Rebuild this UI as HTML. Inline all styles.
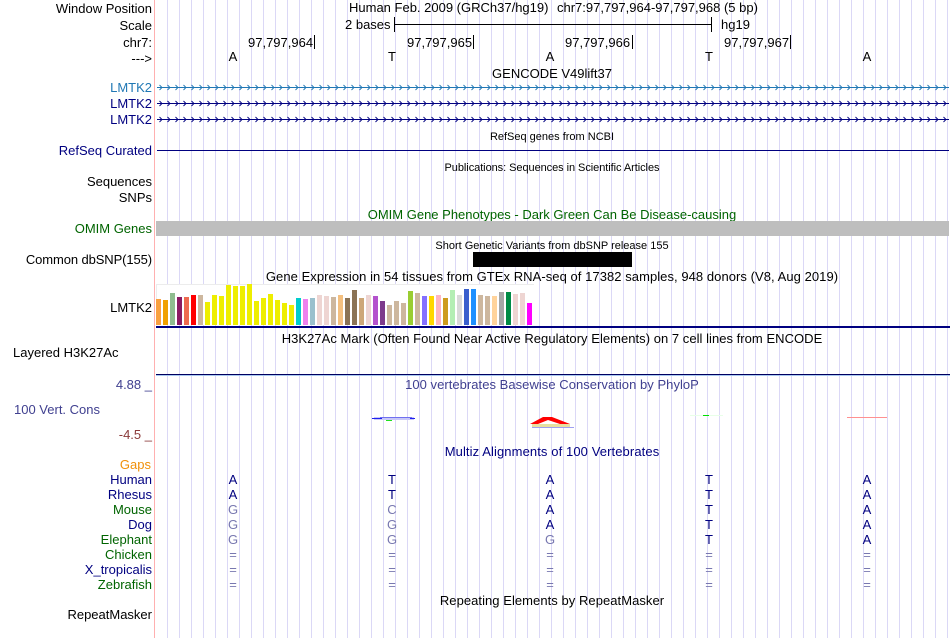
<!DOCTYPE html>
<html>
<head>
<meta charset="utf-8">
<style>
html,body{margin:0;padding:0;background:#fff;}
body{width:950px;height:638px;position:relative;overflow:hidden;font-family:"Liberation Sans",sans-serif;font-size:13px;color:#000;}
#grid{position:absolute;left:167px;top:0;width:783px;height:638px;background:linear-gradient(to right,#dbd8f6 1px,transparent 1px) 0 0/12px 100% repeat-x;}
#pink{position:absolute;left:154px;top:0;width:1px;height:638px;background:#ffb0b0;}
.l{position:absolute;right:798px;white-space:nowrap;line-height:16px;height:16px;text-align:right;}
.a{position:absolute;white-space:nowrap;line-height:16px;height:16px;}
.c{position:absolute;left:152px;width:800px;text-align:center;white-space:nowrap;line-height:16px;height:16px;}
.s{font-size:11px;}
.b{position:absolute;}
.n{color:#000080;}
.g{color:#006400;}
.f{color:#7878b0;}
.m{position:absolute;width:20px;text-align:center;line-height:16px;height:16px;}
</style>
</head>
<body>
<div id="grid"></div>
<div id="pink"></div>

<div class="l" style="top:1px">Window Position</div>
<div class="l" style="top:18px">Scale</div>
<div class="l" style="top:35px">chr7:</div>
<div class="l" style="top:51px">---&gt;</div>
<div class="l" style="top:80px;color:#1f77b4">LMTK2</div>
<div class="l n" style="top:96px">LMTK2</div>
<div class="l n" style="top:112px">LMTK2</div>
<div class="l n" style="top:143px">RefSeq Curated</div>
<div class="l" style="top:174px">Sequences</div>
<div class="l" style="top:190px">SNPs</div>
<div class="l g" style="top:221px">OMIM Genes</div>
<div class="l" style="top:252px;letter-spacing:-.1px">Common dbSNP(155)</div>
<div class="l" style="top:300px">LMTK2</div>
<div class="a" style="left:13px;top:345px">Layered H3K27Ac</div>
<div class="l" style="top:377px;color:#404090">4.88 _</div>
<div class="a" style="left:14px;top:402px;color:#404090">100 Vert. Cons</div>
<div class="l" style="top:427px;color:#8b3a3a">-4.5 _</div>
<div class="l" style="top:457px;right:799px;color:#f0900a">Gaps</div>
<div class="l n" style="top:472px">Human</div>
<div class="l n" style="top:487px">Rhesus</div>
<div class="l g" style="top:502px">Mouse</div>
<div class="l n" style="top:517px">Dog</div>
<div class="l g" style="top:532px">Elephant</div>
<div class="l g" style="top:547px">Chicken</div>
<div class="l n" style="top:562px">X_tropicalis</div>
<div class="l g" style="top:577px">Zebrafish</div>
<div class="l" style="top:607px">RepeatMasker</div>

<div class="a" style="left:349px;top:0">Human Feb. 2009 (GRCh37/hg19)</div>
<div class="a" style="left:557px;top:0">chr7:97,797,964-97,797,968 (5 bp)</div>
<div class="a" style="left:345px;top:17px">2 bases</div>
<div class="a" style="left:721px;top:17px">hg19</div>
<div class="b" style="left:394px;top:24px;width:318px;height:1px;background:#000"></div>
<div class="b" style="left:394px;top:17px;width:1px;height:15px;background:#000"></div>
<div class="b" style="left:711px;top:17px;width:1px;height:15px;background:#000"></div>

<div class="a" style="left:248px;top:35px">97,797,964</div>
<div class="b" style="left:314px;top:35px;width:1px;height:14px;background:#000"></div>
<div class="a" style="left:407px;top:35px">97,797,965</div>
<div class="b" style="left:473px;top:35px;width:1px;height:14px;background:#000"></div>
<div class="a" style="left:565px;top:35px">97,797,966</div>
<div class="b" style="left:632px;top:35px;width:1px;height:14px;background:#000"></div>
<div class="a" style="left:724px;top:35px">97,797,967</div>
<div class="b" style="left:790px;top:35px;width:1px;height:14px;background:#000"></div>

<div class="m" style="left:223px;top:49px">A</div>
<div class="m" style="left:382px;top:49px">T</div>
<div class="m" style="left:540px;top:49px">A</div>
<div class="m" style="left:699px;top:49px">T</div>
<div class="m" style="left:857px;top:49px">A</div>

<div class="c" style="top:66px">GENCODE V49lift37</div>

<svg class="b" style="left:157px;top:80px" width="792" height="47" viewBox="0 0 792 47">
<defs>
<pattern id="p1" x="0" y="0" width="8" height="47" patternUnits="userSpaceOnUse">
<path d="M2.5 5L5 7.5L2.5 10" fill="none" stroke="#1f77b4" stroke-width=".9"/>
<path d="M2.5 21L5 23.5L2.5 26" fill="none" stroke="#000080" stroke-width=".9"/>
<path d="M2.5 37L5 39.5L2.5 42" fill="none" stroke="#000080" stroke-width=".9"/>
</pattern>
</defs>
<rect x="0" y="7" width="792" height="1" fill="#1f77b4"/>
<rect x="0" y="23" width="792" height="1" fill="#000080"/>
<rect x="0" y="39" width="792" height="1" fill="#000080"/>
<rect x="0" y="0" width="792" height="47" fill="url(#p1)"/>
</svg>

<div class="c s" style="top:129px">RefSeq genes from NCBI</div>
<div class="b" style="left:157px;top:150px;width:792px;height:1px;background:#000080"></div>
<div class="c s" style="top:160px;letter-spacing:-.06px">Publications: Sequences in Scientific Articles</div>
<div class="c g" style="top:207px">OMIM Gene Phenotypes - Dark Green Can Be Disease-causing</div>
<div class="b" style="left:156px;top:221px;width:793px;height:15px;background:#bebebe"></div>
<div class="c s" style="top:238px">Short Genetic Variants from dbSNP release 155</div>
<div class="b" style="left:473px;top:252px;width:159px;height:15px;background:#000"></div>
<div class="c" style="top:269px;letter-spacing:.055px">Gene Expression in 54 tissues from GTEx RNA-seq of 17382 samples, 948 donors (V8, Aug 2019)</div>

<svg class="b" style="left:156px;top:284px" width="794" height="44" viewBox="0 0 794 44">
<rect x="0" y="0" width="378" height="41" fill="#fff"/>
<path d="M0.5 41V0.5H378" fill="none" stroke="#ececec"/>
<rect x="0" y="15" width="5" height="26" fill="#f9a040"/>
<rect x="7" y="16" width="5" height="25" fill="#f0a000"/>
<rect x="14" y="9" width="5" height="32" fill="#8fbc8f"/>
<rect x="21" y="13" width="5" height="28" fill="#8b1a62"/>
<rect x="28" y="13" width="5" height="28" fill="#ee6a50"/>
<rect x="35" y="11" width="5" height="30" fill="#ff0000"/>
<rect x="42" y="11" width="5" height="30" fill="#cdb79e"/>
<rect x="49" y="18" width="5" height="23" fill="#eeee00"/>
<rect x="56" y="11" width="5" height="30" fill="#eeee00"/>
<rect x="63" y="12" width="5" height="29" fill="#eeee00"/>
<rect x="70" y="1" width="5" height="40" fill="#eeee00"/>
<rect x="77" y="2" width="5" height="39" fill="#eeee00"/>
<rect x="84" y="2" width="5" height="39" fill="#eeee00"/>
<rect x="91" y="0" width="5" height="41" fill="#eeee00"/>
<rect x="98" y="17" width="5" height="24" fill="#eeee00"/>
<rect x="105" y="14" width="5" height="27" fill="#eeee00"/>
<rect x="112" y="10" width="5" height="31" fill="#eeee00"/>
<rect x="119" y="16" width="5" height="25" fill="#eeee00"/>
<rect x="126" y="19" width="5" height="22" fill="#eeee00"/>
<rect x="133" y="21" width="5" height="20" fill="#eeee00"/>
<rect x="140" y="14" width="5" height="27" fill="#00cdcd"/>
<rect x="147" y="15" width="5" height="26" fill="#ee82ee"/>
<rect x="154" y="14" width="5" height="27" fill="#9ac0cd"/>
<rect x="161" y="11" width="5" height="30" fill="#eed5d2"/>
<rect x="168" y="12" width="5" height="29" fill="#eed5d2"/>
<rect x="175" y="13" width="5" height="28" fill="#cdb79e"/>
<rect x="182" y="11" width="5" height="30" fill="#f4c080"/>
<rect x="189" y="14" width="5" height="27" fill="#8b7355"/>
<rect x="196" y="6" width="5" height="35" fill="#8b7355"/>
<rect x="203" y="14" width="5" height="27" fill="#cda778"/>
<rect x="210" y="11" width="5" height="30" fill="#eed5d2"/>
<rect x="217" y="12" width="5" height="29" fill="#b452cd"/>
<rect x="224" y="17" width="5" height="24" fill="#7d3a8c"/>
<rect x="231" y="21" width="5" height="20" fill="#cdb79e"/>
<rect x="238" y="17" width="5" height="24" fill="#cdb79e"/>
<rect x="245" y="19" width="5" height="22" fill="#cdb79e"/>
<rect x="252" y="7" width="5" height="34" fill="#9acd32"/>
<rect x="259" y="9" width="5" height="32" fill="#cdb79e"/>
<rect x="266" y="12" width="5" height="29" fill="#8470ff"/>
<rect x="273" y="12" width="5" height="29" fill="#ffd700"/>
<rect x="280" y="11" width="5" height="30" fill="#ffb6c1"/>
<rect x="287" y="14" width="5" height="27" fill="#cd9b1d"/>
<rect x="294" y="6" width="5" height="35" fill="#b4eeb4"/>
<rect x="301" y="11" width="5" height="30" fill="#d9d9d9"/>
<rect x="308" y="5" width="5" height="36" fill="#3a5fcd"/>
<rect x="315" y="5" width="5" height="36" fill="#1e90ff"/>
<rect x="322" y="11" width="5" height="30" fill="#cdb79e"/>
<rect x="329" y="12" width="5" height="29" fill="#cdb79e"/>
<rect x="336" y="12" width="5" height="29" fill="#ffd39b"/>
<rect x="343" y="8" width="5" height="33" fill="#a6a6a6"/>
<rect x="350" y="8" width="5" height="33" fill="#008b45"/>
<rect x="357" y="10" width="5" height="31" fill="#eed5d2"/>
<rect x="364" y="9" width="5" height="32" fill="#eed5d2"/>
<rect x="371" y="19" width="5" height="22" fill="#ff00ff"/>
<rect x="0" y="42" width="794" height="2" fill="#000080"/>
</svg>

<div class="c" style="top:331px;letter-spacing:.035px">H3K27Ac Mark (Often Found Near Active Regulatory Elements) on 7 cell lines from ENCODE</div>
<div class="b" style="left:156px;top:374px;width:794px;height:1px;background:#000060"></div>
<div class="b" style="left:156px;top:375px;width:794px;height:1px;background:#a8c8f0"></div>
<div class="c" style="top:377px;color:#404090;letter-spacing:.04px">100 vertebrates Basewise Conservation by PhyloP</div>

<svg class="b" style="left:360px;top:405px" width="530" height="30" viewBox="0 0 530 30">
<rect x="14" y="12" width="40" height="3" fill="#c8c8f8"/>
<rect x="20" y="12" width="32" height="1" fill="#7070f0"/>
<rect x="12" y="13" width="10" height="1" fill="#2020f0"/>
<rect x="50" y="13" width="5" height="1" fill="#2020f0"/>
<rect x="26" y="15" width="6" height="1" fill="#20e020"/>
<path d="M170 19L183 12H192L210 19Z" fill="#ff0000"/>
<path d="M178 19L188 15L200 19Z" fill="#fff"/>
<rect x="172" y="19" width="38" height="3" fill="#e8e0a0"/>
<rect x="172" y="22" width="42" height="1" fill="#a0a0f0"/>
<rect x="330" y="10" width="33" height="1" fill="#e8ffe8"/>
<rect x="343" y="10" width="6" height="1" fill="#00e000"/>
<rect x="487" y="12" width="40" height="1" fill="#ff9090"/>
</svg>

<div class="c" style="top:444px;color:#000080;letter-spacing:.1px">Multiz Alignments of 100 Vertebrates</div>

<div class="m n" style="left:223px;top:472px">A</div><div class="m n" style="left:382px;top:472px">T</div><div class="m n" style="left:540px;top:472px">A</div><div class="m n" style="left:699px;top:472px">T</div><div class="m n" style="left:857px;top:472px">A</div>
<div class="m n" style="left:223px;top:487px">A</div><div class="m n" style="left:382px;top:487px">T</div><div class="m n" style="left:540px;top:487px">A</div><div class="m n" style="left:699px;top:487px">T</div><div class="m n" style="left:857px;top:487px">A</div>
<div class="m f" style="left:223px;top:502px">G</div><div class="m f" style="left:382px;top:502px">C</div><div class="m n" style="left:540px;top:502px">A</div><div class="m n" style="left:699px;top:502px">T</div><div class="m n" style="left:857px;top:502px">A</div>
<div class="m f" style="left:223px;top:517px">G</div><div class="m f" style="left:382px;top:517px">G</div><div class="m n" style="left:540px;top:517px">A</div><div class="m n" style="left:699px;top:517px">T</div><div class="m n" style="left:857px;top:517px">A</div>
<div class="m f" style="left:223px;top:532px">G</div><div class="m f" style="left:382px;top:532px">G</div><div class="m f" style="left:540px;top:532px">G</div><div class="m n" style="left:699px;top:532px">T</div><div class="m n" style="left:857px;top:532px">A</div>
<div class="m f" style="left:223px;top:547px">=</div><div class="m f" style="left:382px;top:547px">=</div><div class="m f" style="left:540px;top:547px">=</div><div class="m f" style="left:699px;top:547px">=</div><div class="m f" style="left:857px;top:547px">=</div>
<div class="m f" style="left:223px;top:562px">=</div><div class="m f" style="left:382px;top:562px">=</div><div class="m f" style="left:540px;top:562px">=</div><div class="m f" style="left:699px;top:562px">=</div><div class="m f" style="left:857px;top:562px">=</div>
<div class="m f" style="left:223px;top:577px">=</div><div class="m f" style="left:382px;top:577px">=</div><div class="m f" style="left:540px;top:577px">=</div><div class="m f" style="left:699px;top:577px">=</div><div class="m f" style="left:857px;top:577px">=</div>

<div class="c" style="top:593px;letter-spacing:.05px">Repeating Elements by RepeatMasker</div>
</body>
</html>
